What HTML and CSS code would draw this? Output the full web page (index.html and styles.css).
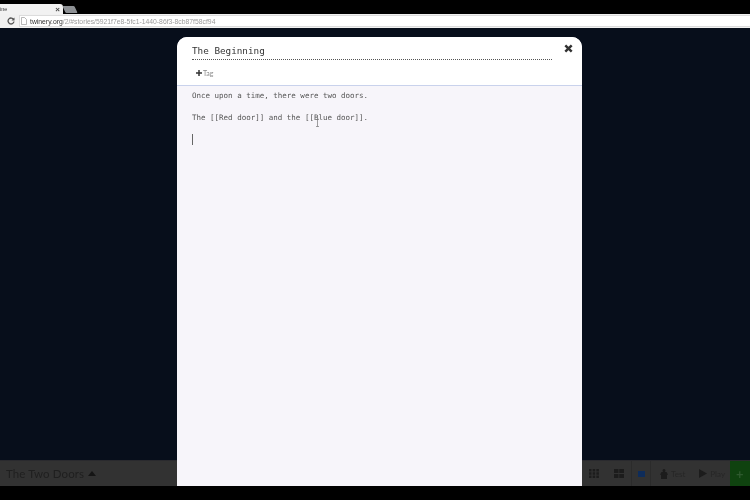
FILE: index.html
```html
<!DOCTYPE html>
<html lang="en">

<head>
    <meta charset="UTF-8" />
    <title>Twine</title>
    <link rel="stylesheet" href="styles.css">
</head>

<body>
    <div class="tabstrip">
        <div class="tab">
            <span class="tab-title">ine</span>
            <span class="tab-close">×</span>
        </div>
        <div class="tab-new"></div>
    </div>
    <div class="toolbar">
        <span class="reload">
            <svg width="8" height="8" viewBox="0 0 8 8"><path d="M6.700 2.600A3 3 0 1 0 7 4.500" fill="none" stroke="#555" stroke-width="1.300" /><path d="M7.500 .5v3h-3z" fill="#555" /></svg>
        </span>
        <div class="omnibox">
            <svg class="page-icon" width="6" height="8" viewBox="0 0 6 8"><path d="M.5.500h3l2 2v5h-5z" fill="#fff" stroke="#999" stroke-width=".7" /></svg>
            <span class="url"><b>twinery.org</b>/2/#stories/5921f7e8-5fc1-1440-86f3-8cb87f58cf94</span>
        </div>
    </div>

    <div class="stage">
        <div class="story-bar">
            <div class="story-name">The Two Doors <span class="caret"></span></div>
            <div class="story-tools">
                <svg class="tool-icon first" width="10" height="9" viewBox="0 0 10 9">
                    <path d="M0 0h2.500v2.500H0zM3.700 0h2.500v2.500H3.700zM7.400 0h2.500v2.500H7.400zM0 3.300h2.500v2.500H0zM3.700 3.300h2.500v2.500H3.700zM7.400 3.300h2.500v2.500H7.400zM0 6.500h2.500V9H0zM3.700 6.500h2.500V9H3.700zM7.400 6.500h2.500V9H7.400z" fill="#1c1c1c" />
                </svg>
                <svg class="tool-icon second" width="10" height="9" viewBox="0 0 10 9">
                    <path d="M0 0h4.500v4H0zM5.300 0H10v4H5.300zM0 4.900h4.500V9H0zM5.300 4.900H10V9H5.300z" fill="#1c1c1c" />
                </svg>
                <div class="zoom-active"><span class="zoom-square"></span></div>
                <div class="tool-btn test">
                    <svg width="8" height="10" viewBox="0 0 8 10"><path d="M4 0a1.500 1.500 0 0 1 1.500 1.500L5 3h1.500L8 5.500 7 6v4H1V6L0 5.500 1.500 3H3l-.5-1.500A1.500 1.500 0 0 1 4 0z" fill="#1c1c1c" /></svg>
                    Test
                </div>
                <div class="tool-btn play">
                    <svg width="8" height="9" viewBox="0 0 8 9"><path d="M0 0l8 4.500L0 9z" fill="#1c1c1c" /></svg>
                    Play
                </div>
                <div class="add-btn"><span class="add-plus">+</span></div>
            </div>
        </div>

        <div class="modal">
            <div class="modal-head">
                <div class="title-row">
                    <div class="title">The Beginning</div>
                    <svg class="close" width="9" height="9" viewBox="0 0 9 9"><path d="M1.300 1.300l6.400 6.400M7.700 1.300L1.300 7.700" stroke="#333" stroke-width="2.400" /></svg>
                </div>
                <div class="tag-row">
                    <svg class="tag-plus" width="6" height="6" viewBox="0 0 6 6"><path d="M3 0v6M0 3h6" stroke="#333" stroke-width="1.500" /></svg>
                    Tag
                </div>
            </div>
            <div class="editor">
                <p>Once upon a time, there were two doors.</p>
                <p>The [[Red door]] and the [[Blue door]].</p>
                <div class="text-cursor"></div>
                <svg class="ibeam" width="5" height="8" viewBox="0 0 5 8"><path d="M1 .5h3M2.500.5v7M1 7.500h3" fill="none" stroke="#777" stroke-width=".7" /></svg>
            </div>
        </div>
    </div>
    <div class="bottom-band"></div>
</body>

</html>
```

FILE: styles.css
```css
* {
    box-sizing: border-box;
}

html,
body {
    height: 100%;
}

body {
    margin: 0;
    display: flex;
    flex-direction: column;
    overflow: hidden;
    background: #000;
    font-family: 'Liberation Sans', sans-serif;
}

/* the source is a soft video frame, so each part gets a slight blur */
.tabstrip,
.toolbar,
.story-bar,
.modal {
    filter: blur(0.35px);
}

.tabstrip {
    display: flex;
    align-items: flex-end;
    height: 14px;
    background: #000;
}

.tab {
    display: flex;
    justify-content: space-between;
    align-items: center;
    width: 63px;
    height: 10px;
    padding: 0 3px 0 0;
    background: #f2f2f2;
    border-radius: 0 3px 0 0;
    font-size: 5.500px;
    color: #333;
}

.tab-close {
    font-size: 8px;
    font-weight: bold;
    color: #444;
}

.tab-new {
    width: 12px;
    height: 7px;
    margin: 0 0 1px 1px;
    background: #8d9094;
    transform: skewX(25deg);
    border-radius: 1px;
}

.toolbar {
    display: flex;
    align-items: center;
    height: 14px;
    padding-left: 7px;
    background: #f1f1f1;
}

.reload {
    display: flex;
    margin-right: 4px;
}

.omnibox {
    display: flex;
    align-items: center;
    gap: 3px;
    flex: 1;
    height: 12px;
    padding-left: 1px;
    background: #fff;
    border: 1px solid #dcdcdc;
    border-right: 0;
}

.url {
    font-size: 6.800px;
    color: #9a9a9a;
    white-space: nowrap;
}

.url b {
    font-weight: normal;
    color: #333;
}

.stage {
    position: relative;
    flex: 1;
    display: flex;
    flex-direction: column;
    justify-content: flex-end;
    background: #070e1b;
}

.story-bar {
    display: flex;
    justify-content: space-between;
    align-items: stretch;
    height: 26px;
    background: #323232;
    border-top: 1px solid #2a2a2e;
}

.story-name {
    display: flex;
    align-items: center;
    gap: 4px;
    padding-left: 6px;
    font-family: 'Lato', sans-serif;
    font-size: 11.500px;
    letter-spacing: 0.1px;
    color: #1f1f1f;
}

.caret {
    width: 0;
    height: 0;
    border-left: 4.500px solid transparent;
    border-right: 4.500px solid transparent;
    border-bottom: 5px solid #151515;
}

.story-tools {
    display: flex;
    align-items: center;
    font-family: 'Lato', sans-serif;
    font-size: 8px;
    color: #262626;
}

.tool-icon {
    margin-right: 15px;
}

.zoom-active {
    display: flex;
    align-items: center;
    justify-content: center;
    width: 20px;
    height: 100%;
    margin-left: -8px;
    border-left: 1px solid #2b2b2b;
    border-right: 1px solid #2b2b2b;
}

.zoom-square {
    width: 7px;
    height: 6px;
    background: #0e2c5a;
}

.tool-btn {
    display: flex;
    align-items: center;
    gap: 3px;
}

.test {
    margin-left: 9px;
}

.play {
    margin-left: 14px;
}

.add-btn {
    display: flex;
    align-items: center;
    width: 20px;
    height: 100%;
    margin-left: 5px;
    padding-left: 6px;
    background: #0f420f;
}

.add-plus {
    font-size: 13px;
    font-weight: bold;
    color: #2e5a2e;
}

.bottom-band {
    height: 14px;
    background: #000;
}

/* dialog sits over the story map and runs to the bottom of the viewport band */
.modal {
    position: absolute;
    top: 9px;
    left: 177px;
    display: flex;
    flex-direction: column;
    width: 405px;
    height: 449px;
    background: #f7f5fa;
    border-radius: 10px 10px 0 0;
    overflow: hidden;
}

.modal-head {
    height: 49px;
    padding: 0 15px;
    background: #fff;
    border-bottom: 1px solid #c9d2ec;
}

.title-row {
    position: relative;
    width: 360px;
    height: 23px;
    padding-top: 8px;
    border-bottom: 1px dotted #555;
}

.title {
    font-family: 'DejaVu Sans Mono', monospace;
    font-size: 9.300px;
    color: #333;
}

.close {
    position: absolute;
    top: 7px;
    left: 372px;
}

.tag-row {
    display: flex;
    align-items: center;
    gap: 1px;
    height: 26px;
    padding-left: 4px;
    font-family: 'Lato', sans-serif;
    font-size: 7px;
    color: #8a8a8a;
}

.editor {
    position: relative;
    flex: 1;
    padding: 4px 15px;
    font-family: 'DejaVu Sans Mono', monospace;
    font-size: 7.500px;
    color: #555;
}

.editor p {
    height: 21.500px;
    margin: 0;
    line-height: 11px;
}

.text-cursor {
    width: 1px;
    height: 11px;
    margin-top: 1px;
    background: #666;
}

.ibeam {
    position: absolute;
    top: 33px;
    left: 138px;
}
```
